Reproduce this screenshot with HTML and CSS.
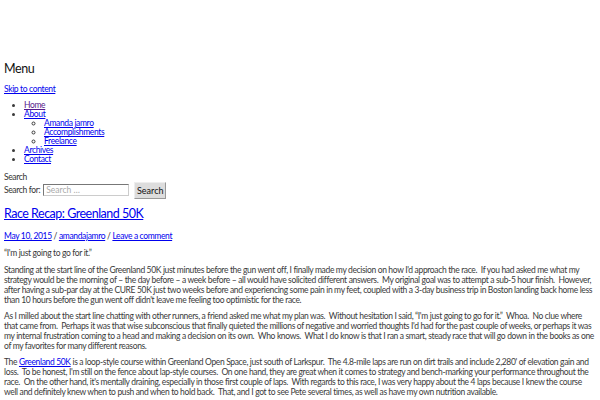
FILE: index.html
```html
<!DOCTYPE html>
<html>
<head>
<meta charset="utf-8">
<link rel="stylesheet" href="styles.css">
</head>
<body>
<header class="site-header">
  <div class="menu-title">Menu</div>
  <a class="skip" href="#content">Skip to content</a>
  <ul class="nav">
    <li><a class="visited" href="#">Home</a></li>
    <li><a href="#">About</a>
      <ul class="sub">
        <li><a href="#">Amanda jamro</a></li>
        <li><a href="#">Accomplishments</a></li>
        <li><a href="#">Freelance</a></li>
      </ul>
    </li>
    <li><a href="#">Archives</a></li>
    <li><a href="#">Contact</a></li>
  </ul>
  <div class="search-title">Search</div>
  <form class="search-form">
    <label class="search-label">Search for:</label>
    <input class="search-input" type="text" placeholder="Search …">
    <button class="search-btn" type="button">Search</button>
  </form>
</header>
<main id="content">
  <h1 class="entry-title"><a href="#">Race Recap: Greenland 50K</a></h1>
  <div class="entry-meta"><a href="#">May 10, 2015</a> / <a href="#">amandajamro</a> / <a href="#">Leave a comment</a></div>
  <p class="quote">“I'm just going to go for it.”</p>
  <p>Standing at the start line of the Greenland 50K just minutes before the gun went off, I finally made my decision on how I'd approach the race.&nbsp; If you had asked me what my strategy would be the morning of – the day before – a week before – all would have solicited different answers.&nbsp; My original goal was to attempt a sub-5 hour finish.&nbsp; However, after having a sub-par day at the CURE 50K just two weeks before and experiencing some pain in my feet, coupled with a 3-day business trip in Boston landing back home less than 10 hours before the gun went off didn't leave me feeling too optimistic for the race.</p>
  <p>As I milled about the start line chatting with other runners, a friend asked me what my plan was.&nbsp; Without hesitation I said, “I'm just going to go for it.”&nbsp; Whoa.&nbsp; No clue where that came from.&nbsp; Perhaps it was that wise subconscious that finally quieted the millions of negative and worried thoughts I'd had for the past couple of weeks, or perhaps it was my internal frustration coming to a head and making a decision on its own.&nbsp; Who knows.&nbsp; What I do know is that I ran a smart, steady race that will go down in the books as one of my favorites for many different reasons.</p>
  <p>The <a href="#">Greenland 50K</a> is a loop-style course within Greenland Open Space, just south of Larkspur.&nbsp; The 4.8-mile laps are run on dirt trails and include 2,280' of elevation gain and loss.&nbsp; To be honest, I'm still on the fence about lap-style courses.&nbsp; On one hand, they are great when it comes to strategy and bench-marking your performance throughout the race.&nbsp; On the other hand, it's mentally draining, especially in those first couple of laps.&nbsp; With regards to this race, I was very happy about the 4 laps because I knew the course well and definitely knew when to push and when to hold back.&nbsp; That, and I got to see Pete several times, as well as have my own nutrition available.</p>
  <div class="share-box"><a class="share-text" href="#">Like this:</a></div>
</main>
</body>
</html>
```

FILE: styles.css
```css
html, body {
  margin: 0;
  padding: 0;
  background: #fff;
}
body {
  padding: 0 4px;
  font-family: Lato, "Open Sans", sans-serif;
  font-size: 8.5px;
  letter-spacing: -0.35px;
  color: #3a3a3a;
}
a { color: #0000ee; }
a.visited { color: #551a8b; }

.site-header {
  padding-top: 61px;
}
.menu-title {
  font-size: 12.5px;
  line-height: 15px;
  letter-spacing: -0.4px;
  color: #111;
}
.skip {
  display: inline-block;
  margin-top: 8px;
  line-height: 10px;
}
.nav {
  margin: 7px 0 0;
  padding-left: 20px;
  line-height: 9px;
  list-style: disc;
}
.nav .sub {
  margin: 0;
  padding-left: 20px;
  list-style: circle;
}
.search-title {
  margin-top: 8px;
  line-height: 10px;
  color: #333;
}
.search-form {
  display: flex;
  align-items: center;
  margin-top: 0;
  height: 16px;
}
.search-label {
  color: #333;
  margin-right: 3px;
}
.search-input {
  box-sizing: border-box;
  width: 86px;
  height: 12px;
  padding: 0 2px;
  margin: 0 5px 0 0;
  border: 1px solid #777;
  border-right-color: #ccc;
  border-bottom-color: #ccc;
  font: 8.5px Lato, sans-serif;
}
.search-input::placeholder { color: #aaa; }
.search-btn {
  box-sizing: border-box;
  height: 17px;
  width: 32px;
  padding: 0;
  font: 9px Lato, sans-serif;
  color: #111;
  background: #ddd;
  border: 1px solid #999;
  border-top-color: #eee;
  border-left-color: #eee;
}
.entry-title {
  margin: 7px 0 0;
  font-size: 12.5px;
  line-height: 17px;
  font-weight: normal;
  letter-spacing: -0.5px;
}
.entry-meta {
  margin-top: 9px;
  line-height: 10px;
  color: #333;
}
p {
  margin: 6px 0 0;
  line-height: 10px;
}
.quote { margin-top: 7px; margin-bottom: 7px; }
.share-box {
  margin-top: 4px;
  width: 148px;
  height: 20px;
  border-top: 1px solid #ccc;
  border-left: 1px solid #ccc;
  border-right: 1px solid #ccc;
  padding: 2px 6px;
}
```
